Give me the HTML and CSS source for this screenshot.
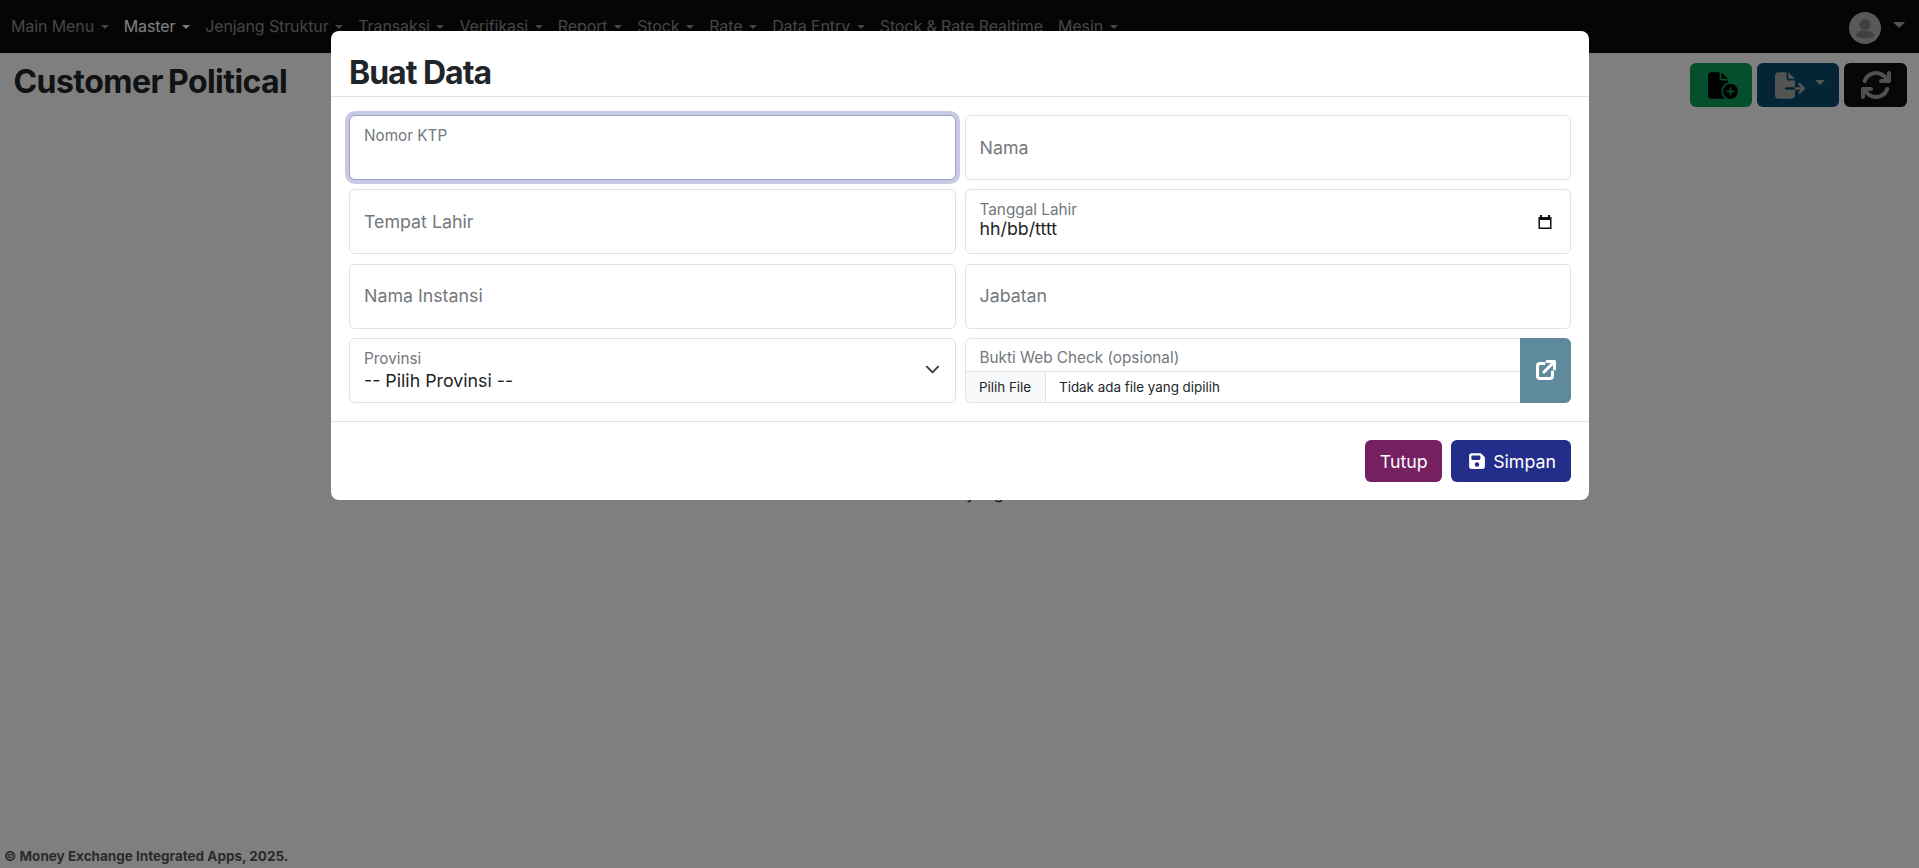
FILE: index.html
```html
<!DOCTYPE html>
<html lang="id">
<head>
<meta charset="utf-8">
<title>Customer Political</title>
<link rel="stylesheet" href="styles.css">
</head>
<body>
<div class="page">
  <nav class="navbar">
    <ul class="menu">
      <li class="caret">Main Menu</li>
      <li class="caret active">Master</li>
      <li class="caret">Jenjang Struktur</li>
      <li class="caret">Transaksi</li>
      <li class="caret">Verifikasi</li>
      <li class="caret">Report</li>
      <li class="caret">Stock</li>
      <li class="caret">Rate</li>
      <li class="caret">Data Entry</li>
      <li>Stock &amp; Rate Realtime</li>
      <li class="caret">Mesin</li>
    </ul>
    <div class="user caret">
      <svg class="avatar" viewBox="0 0 32 32"><circle cx="16" cy="16" r="16" fill="#b3b3b3"/><circle cx="16" cy="12.5" r="5.5" fill="#808080"/><path d="M6.500 24c1-4 5-5.500 9.500-5.500s8.500 1.500 9.500 5.500c-2.500 1.800-6 2.300-9.500 2.300S9 25.800 6.500 24z" fill="#808080"/></svg>
    </div>
  </nav>
  <header class="page-head">
    <h1 class="page-title">Customer Political</h1>
    <div class="actions">
      <button class="act act-green"><svg class="act-icon" viewBox="0 0 576 512"><path fill="#000" d="M0 64C0 28.700 28.700 0 64 0H224V128c0 17.700 14.300 32 32 32H384v38.600C310.100 219.500 256 287.400 256 368c0 59.100 29.100 111.300 73.800 143.300c-3.200 .5-6.400 .7-9.800 .7H64c-35.300 0-64-28.700-64-64V64zm384 64H256V0L384 128zm48 96a144 144 0 1 1 0 288 144 144 0 1 1 0-288zm16 80c0-8.800-7.200-16-16-16s-16 7.200-16 16v48H368c-8.800 0-16 7.200-16 16s7.200 16 16 16h48v48c0 8.800 7.200 16 16 16s16-7.200 16-16V384h48c8.800 0 16-7.200 16-16s-7.200-16-16-16H448V304z"/></svg></button>
      <button class="act act-blue caret"><svg class="act-icon" viewBox="0 0 576 512"><path fill="#a9a9a9" d="M0 64C0 28.700 28.700 0 64 0H224V128c0 17.700 14.300 32 32 32H384V288H216c-13.300 0-24 10.700-24 24s10.700 24 24 24H384V448c0 35.300-28.700 64-64 64H64c-35.300 0-64-28.700-64-64V64zM384 336V288H494.100l-39-39c-9.400-9.400-9.400-24.600 0-33.900s24.600-9.400 33.900 0l80 80c9.400 9.400 9.400 24.600 0 33.900l-80 80c-9.400 9.400-24.600 9.400-33.900 0s-9.400-24.600 0-33.900l39-39H384zm0-208H256V0L384 128z"/></svg></button>
      <button class="act act-black"><svg class="act-icon refresh" viewBox="0 0 512 512"><path fill="#a0a0a0" d="M105.100 202.600c7.700-21.800 20.200-42.300 37.800-59.800 62.500-62.500 163.800-62.500 226.300 0L386.300 160H336c-17.700 0-32 14.300-32 32s14.300 32 32 32h127.900c17.700 0 32-14.300 32-32V64c0-17.700-14.300-32-32-32s-32 14.300-32 32v51.200l-17.500-17.600c-87.500-87.500-229.300-87.500-316.800 0C73.200 122 55.600 150.700 44.800 181.400c-5.900 16.700 2.900 34.900 19.500 40.800s34.900-2.900 40.800-19.500zM39 289.300c-5 1.500-9.800 4.200-13.700 8.200-4 4-6.700 8.800-8.100 14-.3 1.200-.6 2.500-.8 3.800-.3 1.700-.4 3.400-.4 5.100V448c0 17.700 14.300 32 32 32s32-14.300 32-32v-51.100l17.600 17.500c87.500 87.400 229.300 87.400 316.700 0 24.400-24.400 42.100-53.100 52.900-83.700 5.900-16.700-2.900-34.900-19.500-40.800s-34.900 2.900-40.800 19.500c-7.700 21.800-20.200 42.300-37.800 59.800-62.500 62.500-163.800 62.500-226.300 0l-.1-.1L125.600 352H176c17.700 0 32-14.300 32-32s-14.300-32-32-32H48.400c-1.600 0-3.200.1-4.800.3s-3.100.5-4.600 1z"/></svg></button>
    </div>
  </header>
  <p class="loading">Tidak ada data yang tersedia</p>
  <footer class="foot">© Money Exchange Integrated Apps, 2025.</footer>
</div>
<div class="backdrop"></div>
<section class="modal">
  <div class="modal-head"><h2 class="modal-title">Buat Data</h2></div>
  <div class="modal-body">
    <div class="field labelled focus"><span class="label">Nomor KTP</span></div>
    <div class="field"><span class="hint">Nama</span></div>
    <div class="field"><span class="hint">Tempat Lahir</span></div>
    <div class="field labelled">
      <span class="label">Tanggal Lahir</span>
      <span class="value date">hh/bb/tttt</span>
      <svg class="side-icon" viewBox="0 0 16 16"><path d="M3 1h2v2h6V1h2v2h1.500v12h-13V3H3z M3 6v7.500h10V6z" fill="#111" fill-rule="evenodd"/></svg>
    </div>
    <div class="field"><span class="hint">Nama Instansi</span></div>
    <div class="field"><span class="hint">Jabatan</span></div>
    <div class="field labelled">
      <span class="label">Provinsi</span>
      <span class="value">-- Pilih Provinsi --</span>
      <svg class="side-icon chevron" viewBox="0 0 16 16"><path d="M2 5l6 6 6-6" fill="none" stroke="#343a40" stroke-width="2" stroke-linecap="round" stroke-linejoin="round"/></svg>
    </div>
    <div class="file-group">
      <div class="file-box">
        <span class="file-label">Bukti Web Check (opsional)</span>
        <div class="file-row"><span class="file-btn">Pilih File</span><span class="file-name">Tidak ada file yang dipilih</span></div>
      </div>
      <button class="file-link"><svg viewBox="0 0 20 20" class="link-icon"><path d="M8 3.500H4A2.500 2.500 0 0 0 1.500 6v10A2.500 2.500 0 0 0 4 18.500h10a2.500 2.500 0 0 0 2.500-2.500v-4M8 12 18 2M11 1.500h7.500V9" fill="none" stroke="#fff" stroke-width="3" stroke-linecap="round" stroke-linejoin="round"/></svg></button>
    </div>
  </div>
  <div class="modal-foot">
    <button class="btn btn-purple">Tutup</button>
    <button class="btn btn-navy"><svg class="save-icon" viewBox="0 0 448 512"><path fill="#fff" d="M64 32C28.700 32 0 60.700 0 96v320c0 35.300 28.700 64 64 64h320c35.300 0 64-28.700 64-64V173.300c0-17-6.700-33.300-18.700-45.300l-77.300-77.300C339.900 38.700 323.600 32 306.700 32H64zm0 96c0-17.700 14.300-32 32-32h192c17.700 0 32 14.300 32 32v64c0 17.700-14.300 32-32 32H96c-17.700 0-32-14.300-32-32v-64zm160 160a64 64 0 1 1 0 128 64 64 0 1 1 0-128z"/></svg>Simpan</button>
  </div>
</section>
</body>
</html>
```
FILE: styles.css
```css
* { box-sizing: border-box; }
html, body { margin: 0; height: 100%; overflow: hidden; }
body { font-family: Inter, "Liberation Sans", sans-serif; font-size: 16px; color: #212529; background: #fff; }
button { font-family: inherit; border: 0; cursor: pointer; }

.page { height: 868px; display: flex; flex-direction: column; }
.navbar { height: 53px; flex: none; background: #0a0a0a; display: flex; justify-content: space-between; align-items: flex-start; padding: 14px 14px 0 11px; }
.menu { list-style: none; margin: 0; padding: 0; display: flex; gap: 15px; color: #8a8a8a; font-size: 16px; line-height: 24px; letter-spacing: -0.1px; }
.menu .active { color: #fff; }
.caret::after { content: ""; display: inline-block; margin-left: 6.7px; vertical-align: 3px; border-top: 4px solid currentColor; border-left: 4px solid transparent; border-right: 4px solid transparent; }
.user { display: flex; align-items: center; color: #a9a9a9; margin-top: -2px; }
.user::after { margin-left: 12px; margin-bottom: 6px; border-top-width: 6px; border-left-width: 6px; border-right-width: 6px; }
.avatar { width: 32px; height: 32px; display: block; }

.page-head { flex: none; height: 54px; display: flex; justify-content: space-between; align-items: flex-start; padding: 10px 12px 0 13.5px; }
.page-title { margin: 0; font-size: 32px; line-height: 38px; font-weight: 700; letter-spacing: -0.55px; word-spacing: -2px; }
.actions { display: flex; gap: 5px; }
.act { height: 44px; display: flex; align-items: center; justify-content: center; border-radius: 6px; color: #fff; padding: 0; }
.act-green { width: 62px; background: #0a9e58; padding-left: 3px; }
.act-blue { width: 82px; background: #064a6a; color: #a9a9a9; padding-left: 4px; }
.act-blue::after { margin-left: 10px; margin-bottom: 6px; border-top-width: 5px; border-left-width: 5px; border-right-width: 5px; }
.act-black { width: 63px; background: #0f0f0f; }
.act-icon { height: 27px; width: 30px; display: block; }
.act-icon.refresh { height: 32px; width: 32px; }

.loading { margin: 0; text-align: center; padding-top: 374px; font-size: 16px; line-height: 24px; flex: 1; }
.foot { font-size: 13.5px; line-height: 20px; font-weight: 700; padding: 0 0 2px 4px; color: #555; }

.backdrop { position: fixed; inset: 0; background: rgba(0,0,0,.5); }
.modal { position: fixed; left: 331px; top: 31px; width: 1258px; height: 469px; background: #fff; border-radius: 8px; display: flex; flex-direction: column; }
.modal-head { height: 66px; flex: none; padding: 0 18px 4px; display: flex; align-items: flex-end; border-bottom: 1px solid #dee2e6; }
.modal-title { margin: 0; font-size: 32px; line-height: 38px; font-weight: 700; letter-spacing: -1px; }
.modal-body { flex: none; height: 325px; padding: 18px 18px 0; border-bottom: 1px solid #dee2e6; display: grid; grid-template-columns: 1fr 1fr; grid-auto-rows: 65px; column-gap: 9px; row-gap: 9.33px; }
.field { position: relative; border: 1px solid #dee2e6; border-radius: 6px; background: #fff; padding: 0 14px; display: flex; flex-direction: column; justify-content: center; }
.field.labelled { justify-content: flex-start; padding-top: 10px; }
.field.focus { border-color: #9a9fcb; box-shadow: 0 0 0 4px #c8cae4; }
.label { font-size: 15.3px; line-height: 20px; color: #73787d; }
.hint { font-size: 17.8px; line-height: 24px; color: #73787d; }
.value { font-size: 17.8px; line-height: 24px; color: #212529; }
.value.date { margin-top: -3px; }
.side-icon { position: absolute; right: 17px; top: 50%; width: 16px; height: 16px; margin-top: -8px; }
.side-icon.chevron { right: 15px; width: 15px; height: 15px; }
.file-group { display: flex; border-radius: 6px; overflow: hidden; }
.file-box { flex: 1; min-width: 0; display: flex; flex-direction: column; border: 1px solid #dee2e6; border-right: 0; border-radius: 6px 0 0 6px; }
.file-label { flex: 1; padding: 9px 14px 0; font-size: 15.3px; line-height: 20px; color: #73787d; }
.file-row { height: 31px; flex: none; border-top: 1px solid #dee2e6; display: flex; align-items: center; font-size: 13.4px; }
.file-btn { height: 100%; width: 80px; display: flex; align-items: center; padding-left: 13.5px; background: #f8f9fa; border-right: 1px solid #dee2e6; border-bottom-left-radius: 5px; }
.file-name { padding-left: 13.5px; }
.file-link { width: 51px; flex: none; padding: 0; background: #5f8a9b; display: flex; align-items: center; justify-content: center; }
.link-icon { width: 20px; height: 20px; display: block; }
.modal-foot { flex: 1; display: flex; justify-content: flex-end; align-items: flex-start; gap: 9px; padding: 18px 18px 0; }
.btn { height: 42px; border-radius: 6px; color: #fff; font-size: 17.8px; padding: 0 14.500px; display: flex; align-items: center; }
.btn-purple { background: #742061; }
.btn-navy { background: #232e8a; padding: 0 15px 0 17px; }
.save-icon { width: 18px; height: 18px; margin-right: 7px; display: block; }
```
